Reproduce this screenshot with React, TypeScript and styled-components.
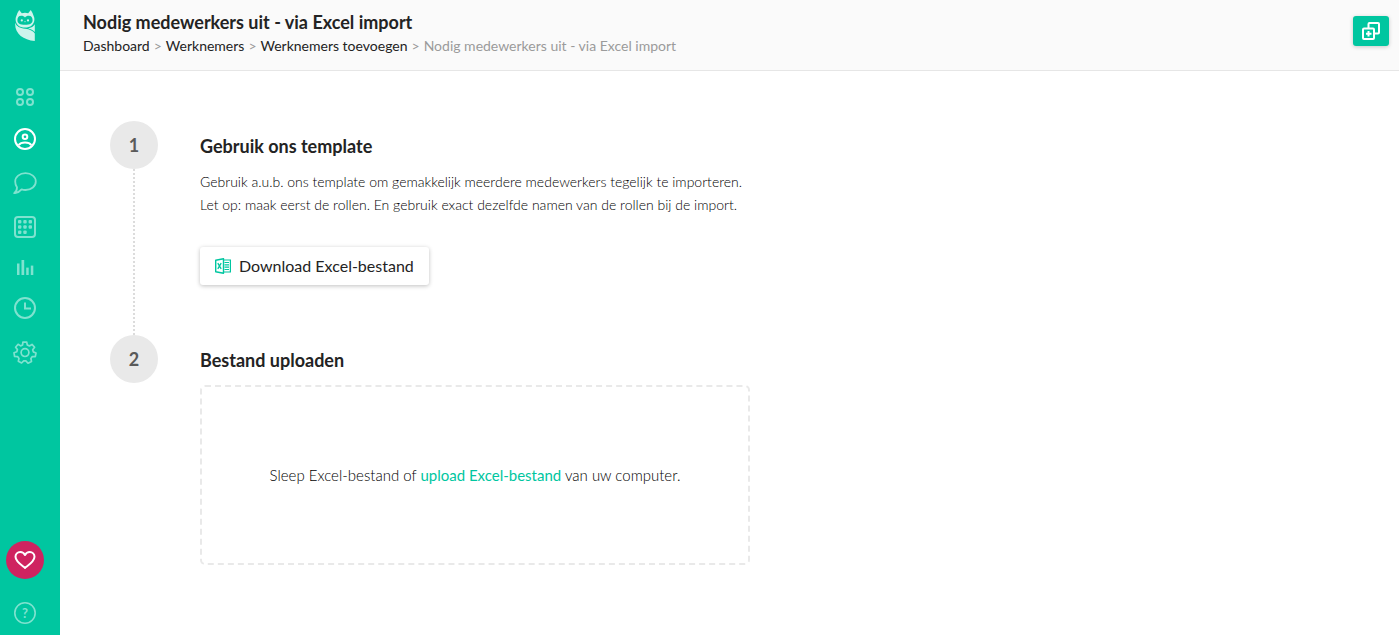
import React from "react";
import styled, { createGlobalStyle } from "styled-components";

const GlobalStyle = createGlobalStyle`
  *, *::before, *::after { box-sizing: border-box; }
  body {
    margin: 0;
    background: #fff;
    color: #232323;
    font-family: Lato, "Liberation Sans", sans-serif;
  }
`;

const Shell = styled.div`
  display: flex;
  min-height: 100vh;
`;

const Sidebar = styled.aside`
  flex: 0 0 60px;
  display: flex;
  flex-direction: column;
  justify-content: space-between;
  padding: 10px 10px 11px 0;
  background: #00c6a0;
`;

const NavGroup = styled.nav<{ $gap: number }>`
  display: flex;
  flex-direction: column;
  align-items: center;
  gap: ${(p) => p.$gap}px;
`;

const LogoLink = styled.a`
  display: block;
  margin-bottom: 24px;
  color: #cdf4ec;
  svg { display: block; }
`;

const NavLink = styled.a<{ $active?: boolean }>`
  display: block;
  color: ${(p) => (p.$active ? "#fff" : "#7fe2cf")};
  svg { display: block; }
`;

const HeartButton = styled.button`
  display: flex;
  align-items: center;
  justify-content: center;
  width: 38px;
  height: 38px;
  padding: 0;
  border: 0;
  border-radius: 50%;
  background: #cf2360;
  color: #fff;
`;

const Main = styled.div`
  flex: 1;
  min-width: 0;
`;

const Header = styled.header`
  display: flex;
  align-items: flex-start;
  justify-content: space-between;
  padding: 10px 10px 13px 23px;
  border-bottom: 1px solid #e6e6e6;
  background: #fafafa;
`;

const PageTitle = styled.h1`
  margin: 0;
  font-size: 18px;
  line-height: 24px;
  font-weight: 700;
`;

const Breadcrumbs = styled.nav`
  display: flex;
  gap: 4px;
  font-size: 14px;
  line-height: 23px;
  color: #9b9b9b;
  a { color: #232323; text-decoration: none; }
`;

const AddButton = styled.button`
  display: flex;
  align-items: center;
  justify-content: center;
  width: 36px;
  height: 30px;
  margin-top: 6px;
  padding: 0;
  border: 0;
  border-radius: 3px;
  background: #00c6a0;
  color: #fff;
  box-shadow: 0 1px 4px rgba(0, 0, 0, 0.2);
`;

const Steps = styled.ol`
  margin: 0;
  padding: 50px;
  list-style: none;
`;

const Rail = styled.div`
  display: flex;
  flex-direction: column;
  align-items: center;
`;

const StepNumber = styled.span`
  display: flex;
  align-items: center;
  justify-content: center;
  width: 48px;
  height: 48px;
  border-radius: 50%;
  background: #e9e9e9;
  color: #5a5a5a;
  font-size: 18px;
  font-weight: 700;
`;

const Connector = styled.span`
  flex: 1;
  border-left: 2px dotted #dcdcdc;
`;

const StepBody = styled.div`
  flex: 0 1 550px;
  min-width: 0;
  padding: 13px 0 50px;
`;

const Step = styled.li`
  display: flex;
  gap: 42px;
  &:last-child ${StepBody} { padding-bottom: 0; }
`;

const StepTitle = styled.h2`
  margin: 0;
  font-size: 18px;
  line-height: 24px;
  font-weight: 700;
`;

const StepText = styled.p`
  margin: 12px 0 31px;
  font-size: 14px;
  line-height: 23px;
  font-weight: 300;
  color: #000;
`;

const DownloadButton = styled.button`
  display: inline-flex;
  align-items: center;
  gap: 8px;
  height: 38px;
  padding: 0 15px;
  border: 0;
  border-radius: 3px;
  background: #fff;
  color: #232323;
  font: 400 16px/24px Lato, "Liberation Sans", sans-serif;
  box-shadow: 0 1px 4px rgba(0, 0, 0, 0.25);
`;

const DropZone = styled.div`
  display: flex;
  align-items: center;
  justify-content: center;
  min-height: 180px;
  margin-top: 13px;
  border: 2px dashed #e9e9e9;
  border-radius: 5px;
  font-size: 15px;
  line-height: 23px;
  font-weight: 300;
  color: #000;
  a { color: #00c6a0; font-weight: 400; text-decoration: none; }
`;

const OwlLogo = () => (
  <svg width="20" height="32" viewBox="15 10 20 32" fill="currentColor" aria-hidden="true">
    <path
      fillRule="evenodd"
      d="M19.2 10 L21.8 13.2 Q25 12.4 28.2 13.2 L30.8 10 Q33 13 34.2 17.5 C35.4 23.5 31 27.6 25 27.6 C19 27.6 14.6 23.5 15.8 17.5 Q17 13 19.2 10Z
      M21.2 15.8 C18.6 15.8 17.4 17.8 17.4 20.2 C17.4 23.2 20 24.8 25 24.8 C30 24.8 32.6 23.2 32.6 20.2 C32.6 17.8 31.4 15.8 28.8 15.8 C27 15.8 25.8 16.4 25 17.4 C24.2 16.4 23 15.8 21.2 15.8Z"
    />
    <circle cx="21.8" cy="20.4" r="1.1" />
    <circle cx="28" cy="20.4" r="1.1" />
    <path d="M24.2 21.3h1.6l-.8 1.2z" />
    <path d="M15.2 22.8 C16.4 26.4 20 28.4 25 28.7 C30 29.2 33.4 31 34.8 33.4 V41 C23 39.8 14.4 33.4 15.2 22.8Z" />
    <path d="M34.8 24.2 V32 C33.2 30 30.8 28.9 28 28.4 C31.2 27.8 33.6 26.4 34.8 24.2Z" />
  </svg>
);

const GridIcon = () => (
  <svg width="18" height="18" viewBox="0 0 18 18" fill="none" stroke="currentColor" strokeWidth="2" aria-hidden="true">
    <circle cx="4" cy="4" r="3" />
    <circle cx="14" cy="4" r="3" />
    <circle cx="4" cy="14" r="3" />
    <circle cx="14" cy="14" r="3" />
  </svg>
);

const PersonIcon = () => (
  <svg width="22" height="22" viewBox="0 0 22 22" fill="none" stroke="currentColor" strokeWidth="2" aria-hidden="true">
    <circle cx="11" cy="11" r="10" />
    <circle cx="11" cy="8.8" r="2.3" />
    <path d="M4.6 17.2C6 15.2 8.2 14.6 11 14.6s5 .6 6.4 2.6" />
  </svg>
);

const ChatIcon = () => (
  <svg width="24" height="22" viewBox="0 0 24 22" fill="none" stroke="currentColor" strokeWidth="1.8" strokeLinejoin="round" aria-hidden="true">
    <path d="M12.5 1.2C18.4 1.2 22.8 4.8 22.8 9.5S18.4 18 12.5 18C11 18 9.8 17.8 8.6 17.4C6.6 19.8 4 21 1.2 21.2C3 19.8 4 17.8 4 15.4C2.8 13.8 2.2 11.7 2.2 9.5C2.2 4.8 6.6 1.2 12.5 1.2Z" />
  </svg>
);

const CALENDAR_DAYS = [[4, 4], [9.3, 4], [14.6, 4], [4, 9.3], [9.3, 9.3], [14.6, 9.3], [4, 14.6], [9.3, 14.6]];

const CalendarIcon = () => (
  <svg width="22" height="22" viewBox="0 0 22 22" aria-hidden="true">
    <rect x="1" y="1" width="20" height="20" rx="3" fill="none" stroke="currentColor" strokeWidth="2" />
    {CALENDAR_DAYS.map(([x, y]) => (
      <rect key={`${x}-${y}`} x={x} y={y} width="3.4" height="3.4" rx="1" fill="currentColor" />
    ))}
  </svg>
);

const ChartIcon = () => (
  <svg width="18" height="15" viewBox="0 0 18 15" fill="currentColor" aria-hidden="true">
    <rect x="1" y="3.5" width="2.5" height="11.5" />
    <rect x="5.5" y="0" width="2.7" height="15" />
    <rect x="10.2" y="7.6" width="2.5" height="7.4" />
    <rect x="14.8" y="5.6" width="2.5" height="9.4" />
  </svg>
);

const ClockIcon = () => (
  <svg width="22" height="22" viewBox="0 0 22 22" fill="none" stroke="currentColor" strokeWidth="2" aria-hidden="true">
    <circle cx="11" cy="11" r="10" />
    <path d="M11 5.5V11.5H17" />
  </svg>
);

const GearIcon = () => (
  <svg width="24" height="24" viewBox="0 0 24 24" fill="none" stroke="currentColor" strokeWidth="1.7" strokeLinejoin="round" aria-hidden="true">
    <circle cx="12" cy="11.6" r="3.9" />
    <path d="M9.9 1.2 13.7 1 14.3 4 16.4 4.9 19 3.4 21.6 6.3 19.7 8.7 20.3 10.9 23 12 22.3 15.6 19.3 15.6 17.9 17.5 18.5 20.4 15 22.2 12.9 19.9 10.7 19.9 8.6 22 5.3 20.3 6 17.4 4.6 15.6 1.6 15.5 1 11.8 3.8 10.7 4.4 8.5 2.6 6.2 5.1 3.3 7.6 4.9 9.6 4Z" />
  </svg>
);

const HeartIcon = () => (
  <svg width="22" height="20" viewBox="0 0 22 20" fill="none" stroke="currentColor" strokeWidth="2" strokeLinejoin="round" aria-hidden="true">
    <path d="M11 18C8 15.5 1.5 11.5 1.5 6.8C1.5 4 3.6 2 6.2 2C8.2 2 10 3 11 5C12 3 13.8 2 15.8 2C18.4 2 20.5 4 20.5 6.8C20.5 11.5 14 15.5 11 18Z" />
  </svg>
);

const HelpIcon = () => (
  <svg width="22" height="22" viewBox="0 0 22 22" aria-hidden="true">
    <circle cx="11" cy="11" r="10.2" fill="none" stroke="currentColor" strokeWidth="1.6" />
    <text x="11" y="15.5" textAnchor="middle" fontSize="13" fontWeight="700" fill="currentColor">?</text>
  </svg>
);

const DuplicateIcon = () => (
  <svg width="18" height="18" viewBox="0 0 18 18" fill="none" stroke="currentColor" strokeWidth="2" aria-hidden="true">
    <path d="M6.5 6V2Q6.5 1 7.5 1H16Q17 1 17 2V10.5Q17 11.5 16 11.5H12" />
    <rect x="1" y="6.5" width="11" height="10.5" rx="1" />
    <path d="M6.5 9V14.5M4 11.7H9.5" />
  </svg>
);

const ExcelIcon = () => (
  <svg width="16" height="16" viewBox="0 0 16 16" fill="none" stroke="#00c6a0" aria-hidden="true">
    <path d="M.7 2.2 8.5.7V15.3L.7 13.8Z" strokeWidth="1.4" strokeLinejoin="round" />
    <path d="M8.5 2H15.4V14H8.5" strokeWidth="1.2" />
    <path d="M2.8 5.2 6.2 10.8M6.2 5.2 2.8 10.8" strokeWidth="1.3" />
    <path d="M9.5 4.5H14M9.5 6.8H14M9.5 9.1H14M9.5 11.5H14" strokeWidth="1.2" />
  </svg>
);

const NAV = [
  { label: "Dashboard", Icon: GridIcon },
  { label: "Werknemers", Icon: PersonIcon, active: true },
  { label: "Berichten", Icon: ChatIcon },
  { label: "Planning", Icon: CalendarIcon },
  { label: "Rapportage", Icon: ChartIcon },
  { label: "Uren", Icon: ClockIcon },
  { label: "Instellingen", Icon: GearIcon },
];

const TRAIL = ["Dashboard", "Werknemers", "Werknemers toevoegen"];

export default function App() {
  return (
    <>
      <GlobalStyle />
      <Shell>
        <Sidebar>
          <NavGroup $gap={22} aria-label="Hoofdmenu">
            <LogoLink href="#" aria-label="Home">
              <OwlLogo />
            </LogoLink>
            {NAV.map(({ label, Icon, active }) => (
              <NavLink key={label} href="#" aria-label={label} $active={active}>
                <Icon />
              </NavLink>
            ))}
          </NavGroup>
          <NavGroup $gap={23} aria-label="Hulp">
            <HeartButton type="button" aria-label="Favorieten">
              <HeartIcon />
            </HeartButton>
            <NavLink href="#" aria-label="Help">
              <HelpIcon />
            </NavLink>
          </NavGroup>
        </Sidebar>
        <Main>
          <Header>
            <div>
              <PageTitle>Nodig medewerkers uit - via Excel import</PageTitle>
              <Breadcrumbs aria-label="Kruimelpad">
                {TRAIL.map((label) => (
                  <React.Fragment key={label}>
                    <a href="#">{label}</a>
                    <span>&gt;</span>
                  </React.Fragment>
                ))}
                <span>Nodig medewerkers uit - via Excel import</span>
              </Breadcrumbs>
            </div>
            <AddButton type="button" aria-label="Toevoegen">
              <DuplicateIcon />
            </AddButton>
          </Header>
          <Steps>
            <Step>
              <Rail>
                <StepNumber>1</StepNumber>
                <Connector />
              </Rail>
              <StepBody>
                <StepTitle>Gebruik ons template</StepTitle>
                <StepText>
                  Gebruik a.u.b. ons template om gemakkelijk meerdere medewerkers tegelijk te importeren.
                  <br />
                  Let op: maak eerst de rollen. En gebruik exact dezelfde namen van de rollen bij de import.
                </StepText>
                <DownloadButton type="button">
                  <ExcelIcon />
                  Download Excel-bestand
                </DownloadButton>
              </StepBody>
            </Step>
            <Step>
              <Rail>
                <StepNumber>2</StepNumber>
              </Rail>
              <StepBody>
                <StepTitle>Bestand uploaden</StepTitle>
                <DropZone>
                  <span>
                    Sleep Excel-bestand of <a href="#">upload Excel-bestand</a> van uw computer.
                  </span>
                </DropZone>
              </StepBody>
            </Step>
          </Steps>
        </Main>
      </Shell>
    </>
  );
}
